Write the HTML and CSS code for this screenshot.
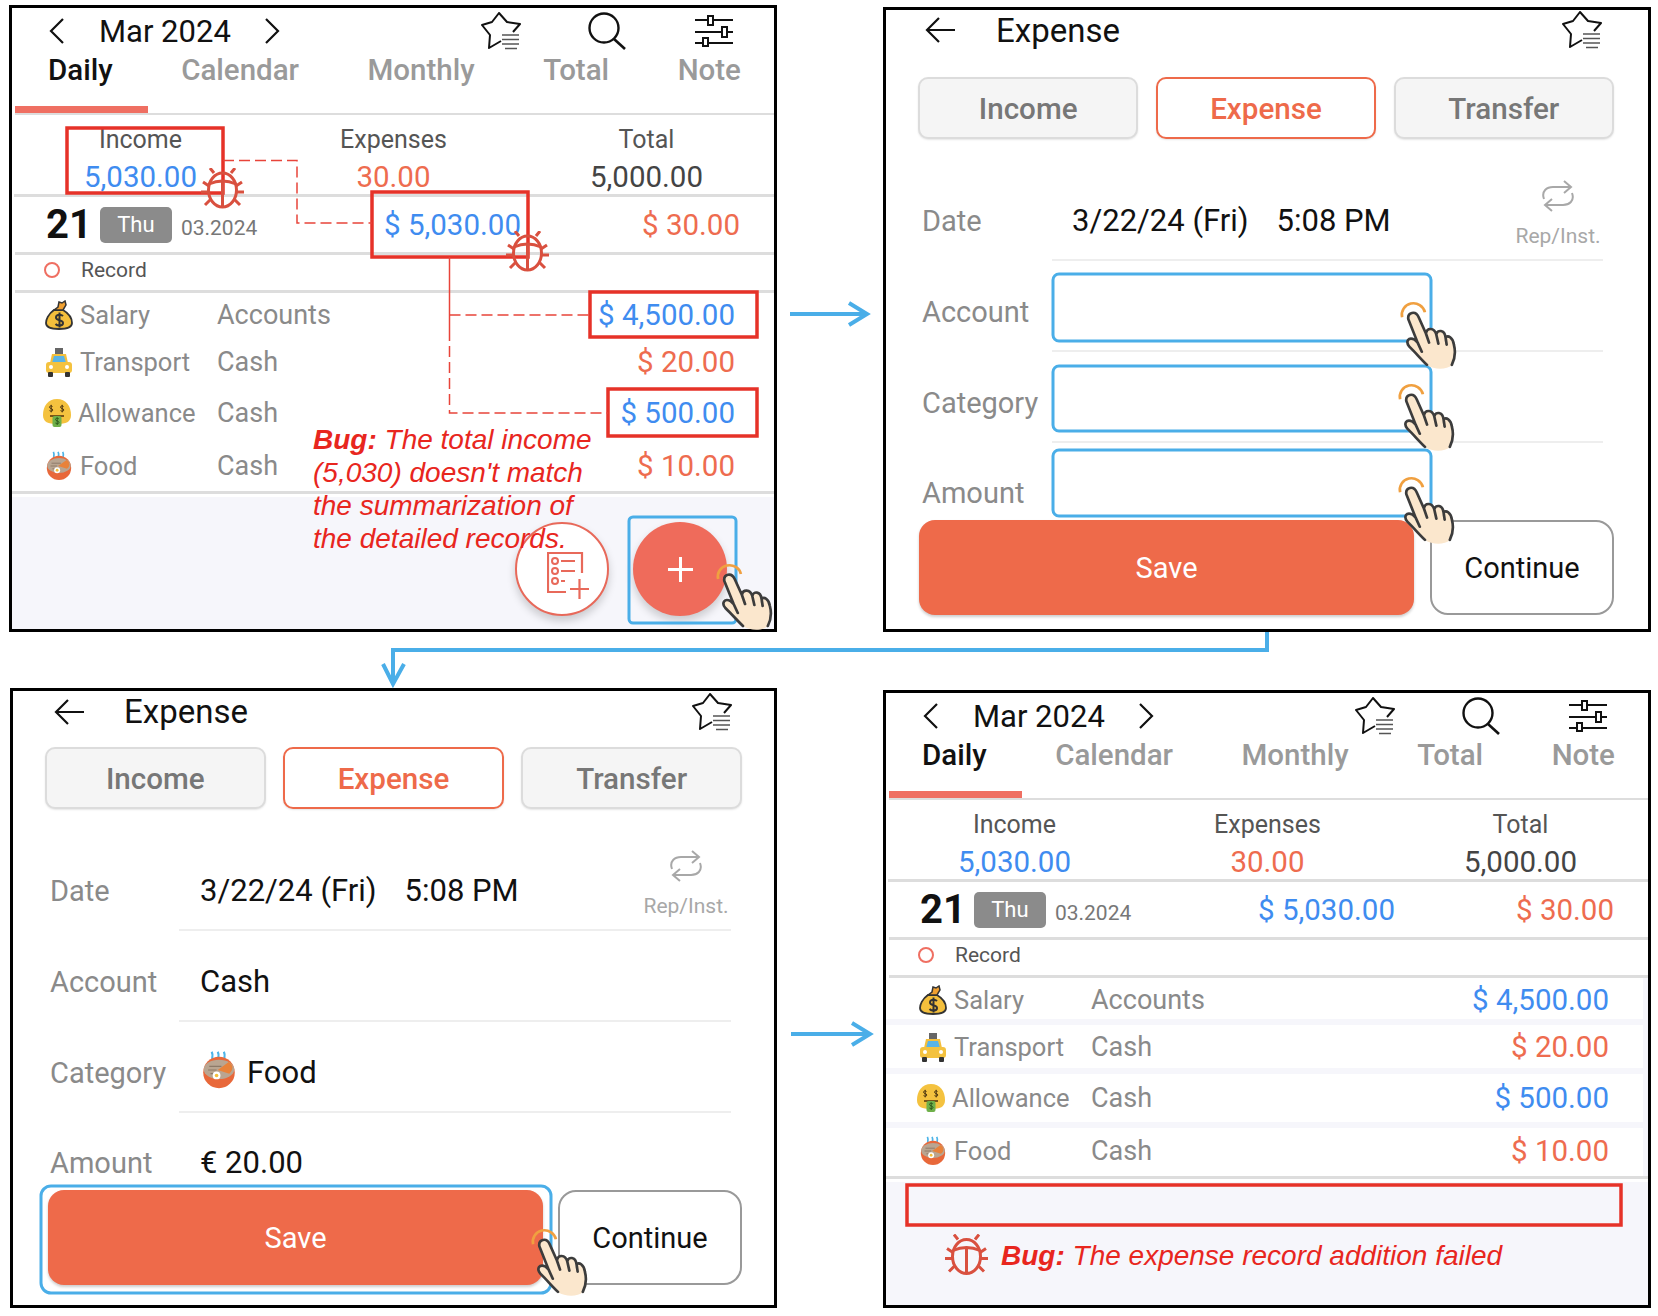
FILE: index.html
```html
<!DOCTYPE html>
<html lang="en">
<head>
    <meta charset="UTF-8">
    <title>Expense record bug walkthrough</title>
    <link rel="stylesheet" href="styles.css">
</head>
<body>
    <!-- shared icons -->
    <svg class="defs" width="0" height="0">
        <symbol id="i-chev-l" viewBox="0 0 16 28"><path d="M14 2 L2 14 L14 26" fill="none" stroke="#111" stroke-width="2.2"/></symbol>
        <symbol id="i-chev-r" viewBox="0 0 16 28"><path d="M2 2 L14 14 L2 26" fill="none" stroke="#111" stroke-width="2.2"/></symbol>
        <symbol id="i-back" viewBox="0 0 30 28"><path d="M30 14 H2 M14 2 L2 14 L14 26" fill="none" stroke="#111" stroke-width="2.2"/></symbol>
        <symbol id="i-star" viewBox="0 0 40 38">
            <path d="M20 29 L8 36 L9 23 L1 13 L11 10 L18 1 L26 10 L39 12 L32 20" fill="none" stroke="#111" stroke-width="2" stroke-linejoin="round"/>
            <path d="M21 23 H38 M21 27.500 H38 M21 32 H38 M24 36.500 H36" fill="none" stroke="#555" stroke-width="1.500"/>
        </symbol>
        <symbol id="i-search" viewBox="0 0 38 38">
            <circle cx="16" cy="16" r="14.500" fill="none" stroke="#111" stroke-width="2.400"/>
            <path d="M26 27 L37 37" stroke="#111" stroke-width="2.600"/>
        </symbol>
        <symbol id="i-sliders" viewBox="0 0 38 32">
            <path d="M0 5 H38 M0 17 H38 M0 28 H38" stroke="#111" stroke-width="2.200"/>
            <rect x="13" y="1" width="5" height="9" fill="#fff" stroke="#111" stroke-width="2"/>
            <rect x="27" y="12" width="5" height="10" fill="#fff" stroke="#111" stroke-width="2"/>
            <rect x="8" y="23" width="5" height="8" fill="#fff" stroke="#111" stroke-width="2"/>
        </symbol>
        <symbol id="i-repeat" viewBox="0 0 34 32">
            <path d="M3 19 C0 11 6 7 12 7 H30 M23 1 L30 7 L23 13 M31 13 C34 21 28 25 22 25 H4 M11 19 L4 25 L11 31" fill="none" stroke="#a8a8a8" stroke-width="2"/>
        </symbol>
        <symbol id="i-bug" viewBox="0 0 43 41">
            <g fill="none" stroke="#d9503f" stroke-width="3">
                <ellipse cx="21.500" cy="22" rx="14" ry="17"/>
                <path d="M8 16 Q21.500 10 35 16 M21.500 13 V39"/>
                <path d="M9 0 L13 5 M34 0 L30 5 M2 14 L8 18 M41 14 L35 18 M0 24 H7 M43 24 H36 M4 37 L10 31 M39 37 L33 31"/>
            </g>
        </symbol>
        <symbol id="i-hand" viewBox="0 0 56 68" preserveAspectRatio="none">
            <path d="M3 17 A11 11 0 0 1 25 12" fill="none" stroke="#f0a040" stroke-width="2.600"/>
            <path d="M9 19 C8 12 16 10 19 17 L26 33 C27 27 34 27 36 34 C37 29 44 29 45 37 C47 34 52 37 53 44 C55 52 54 58 51 64 C46 69 34 69 27 64 C21 58 16 52 10 46 C6 41 9 36 15 39 L18 42 Z" fill="#fbe7cd"/>
            <path d="M51 64 C54 58 55 52 53 44 C52 37 47 34 45 37 C44 29 37 29 36 34 C34 27 27 27 26 33 L19 17 C16 10 8 12 9 19 L18 42 L15 39 C9 36 6 41 10 46 C16 52 21 58 27 64 M26 33 L29 42 M36 34 L38 43 M45 37 L46 44 M18 42 L22 51" fill="none" stroke="#3c3c3c" stroke-width="2.600" stroke-linecap="round"/>
        </symbol>
        <symbol id="e-bag" viewBox="0 0 28 30">
            <path d="M9 10 C3 14 1 20 1 23 C1 28 7 29 14 29 C21 29 27 28 27 23 C27 17 23 13 18 10 Z" fill="#f4bf3c" stroke="#333" stroke-width="1.800"/>
            <path d="M9 10 L13 7 L14 2 L17 3 L20 1 L21 5 L18 10 Z" fill="#f0a030" stroke="#333" stroke-width="1.500"/>
            <path d="M18 16 C16 14 11 14 11 17.500 C11 21 18 19.500 18 23 C18 26 13 26.500 10.500 24 M14.500 12.500 V27.500" fill="none" stroke="#333" stroke-width="2"/>
        </symbol>
        <symbol id="e-taxi" viewBox="0 0 28 30">
            <rect x="10" y="1" width="8" height="6" fill="#666"/>
            <path d="M5 16 L7 7 H21 L23 16 Z" fill="#f4bf3c"/>
            <path d="M7 16 L9 9 H19 L21 16 Z" fill="#5ab4e6"/>
            <rect x="1" y="15" width="26" height="11" rx="3" fill="#f4c23f"/>
            <rect x="3" y="25" width="5" height="5" rx="1" fill="#333"/>
            <rect x="20" y="25" width="5" height="5" rx="1" fill="#333"/>
            <circle cx="6" cy="20" r="2" fill="#fff"/>
            <circle cx="22" cy="20" r="2" fill="#fff"/>
        </symbol>
        <symbol id="e-money" viewBox="0 0 30 30">
            <path d="M15 1 C24 1 29 8 29 17 C29 24 24 26 15 26 C6 26 1 24 1 17 C1 8 6 1 15 1 Z" fill="#f4c23f"/>
            <path d="M10.500 8.500 C9.500 7.500 7.500 7.800 7.500 9.200 C7.500 10.800 10.800 10.300 10.800 12 C10.800 13.400 8.700 13.600 7.500 12.600 M9.200 6.800 V14.400" fill="none" stroke="#4a3410" stroke-width="1"/>
            <path d="M21.500 8.500 C20.500 7.500 18.500 7.800 18.500 9.200 C18.500 10.800 21.800 10.300 21.800 12 C21.800 13.400 19.700 13.600 18.500 12.600 M20.200 6.800 V14.400" fill="none" stroke="#4a3410" stroke-width="1"/>
            <path d="M8 18 H22" stroke="#5a3a10" stroke-width="1.600"/>
            <rect x="10.500" y="18" width="9" height="11" rx="2" fill="#6fb04a"/>
            <path d="M16.800 20.800 C15.800 19.800 13.500 20 13.500 21.500 C13.500 23.200 17 22.700 17 24.400 C17 25.800 14.800 26 13.400 25 M15.200 19.400 V27" fill="none" stroke="#2e5a1c" stroke-width="1"/>
        </symbol>
        <symbol id="e-bowl" viewBox="0 0 28 32">
            <path d="M9 9 C7 7 10 5 8 1 M14 9 C12 7 15 5 13 1 M19 9 C17 7 20 5 18 1" fill="none" stroke="#4db4e8" stroke-width="1.800"/>
            <circle cx="14" cy="18" r="13" fill="#e8683a"/>
            <ellipse cx="14" cy="15.500" rx="12.500" ry="8" fill="#b9a591"/>
            <path d="M6 13 H16 M5 16 H12 M7 19 H14" stroke="#8d7a68" stroke-width="1"/>
            <path d="M13 16 L22 9.500 C26 12 26 16 22.500 19 Z" fill="#e8823a"/>
            <circle cx="12" cy="20.500" r="3.200" fill="#fff"/>
            <circle cx="12" cy="20.500" r="1.500" fill="#f4bf3c"/>
        </symbol>
    </svg>

    <main class="board">
        <section class="panel panel-top ledger">
            <header class="top-bar">
                <svg class="chev"><use href="#i-chev-l"/></svg>
                <h1 class="month">Mar 2024</h1>
                <svg class="chev"><use href="#i-chev-r"/></svg>
                <div class="top-icons">
                    <svg class="ico-star"><use href="#i-star"/></svg>
                    <svg class="ico-search"><use href="#i-search"/></svg>
                    <svg class="ico-sliders"><use href="#i-sliders"/></svg>
                </div>
            </header>
            <nav class="tabs">
                <span class="tab active">Daily</span>
                <span class="tab">Calendar</span>
                <span class="tab">Monthly</span>
                <span class="tab">Total</span>
                <span class="tab">Note</span>
            </nav>
            <div class="summary">
                <div class="sum-col"><span class="sum-label">Income</span><span class="sum-value blue">5,030.00</span></div>
                <div class="sum-col"><span class="sum-label">Expenses</span><span class="sum-value orange">30.00</span></div>
                <div class="sum-col"><span class="sum-label">Total</span><span class="sum-value dark">5,000.00</span></div>
            </div>
            <div class="day-row">
                <div class="day-left">
                    <span class="day-num">21</span>
                    <span class="day-badge">Thu</span>
                    <span class="day-month">03.2024</span>
                </div>
                <span class="money blue">$ 5,030.00</span>
                <span class="money orange day-exp">$ 30.00</span>
            </div>
            <div class="record-row"><span class="record-dot"></span><span>Record</span></div>
            <div class="rows">
                <div class="row">
                    <svg class="emoji"><use href="#e-bag"/></svg>
                    <span class="row-cat">Salary</span>
                    <span class="row-acc">Accounts</span>
                    <span class="money blue">$ 4,500.00</span>
                </div>
                <div class="row">
                    <svg class="emoji"><use href="#e-taxi"/></svg>
                    <span class="row-cat">Transport</span>
                    <span class="row-acc">Cash</span>
                    <span class="money orange">$ 20.00</span>
                </div>
                <div class="row">
                    <svg class="emoji emoji-wide"><use href="#e-money"/></svg>
                    <span class="row-cat row-cat-wide">Allowance</span>
                    <span class="row-acc">Cash</span>
                    <span class="money blue">$ 500.00</span>
                </div>
                <div class="row">
                    <svg class="emoji"><use href="#e-bowl"/></svg>
                    <span class="row-cat">Food</span>
                    <span class="row-acc">Cash</span>
                    <span class="money orange">$ 10.00</span>
                </div>
            </div>
            <div class="ledger-foot">
                <div class="fab fab-outline">
                    <svg class="fab-list" viewBox="0 0 42 47">
                        <path d="M35 21 V1 H1 V40 H19" fill="none" stroke="#e8695a" stroke-width="2.200"/>
                        <g fill="none" stroke="#e8695a" stroke-width="2">
                            <circle cx="8" cy="9" r="3"/><circle cx="8" cy="19" r="3"/><circle cx="8" cy="29" r="3"/>
                        </g>
                        <path d="M14 9 H28 M14 19 H28 M14 29 H18 M23 37 H42 M32.500 27 V47" stroke="#e8695a" stroke-width="2.200"/>
                    </svg>
                </div>
                <div class="fab fab-add"><span class="plus"></span></div>
            </div>
        </section>

        <section class="panel panel-top form">
            <header class="form-head">
                <svg class="back"><use href="#i-back"/></svg>
                <h2 class="form-title">Expense</h2>
                <svg class="ico-star"><use href="#i-star"/></svg>
            </header>
            <div class="seg">
                <span class="seg-btn">Income</span>
                <span class="seg-btn seg-on">Expense</span>
                <span class="seg-btn">Transfer</span>
            </div>
            <div class="field">
                <span class="field-label">Date</span>
                <div class="field-value">3/22/24 (Fri)<span class="field-time">5:08 PM</span>
                    <div class="rep"><svg class="rep-ico"><use href="#i-repeat"/></svg><span>Rep/Inst.</span></div>
                </div>
            </div>
            <div class="field"><span class="field-label">Account</span><div class="field-value"></div></div>
            <div class="field"><span class="field-label">Category</span><div class="field-value"></div></div>
            <div class="field field-last"><span class="field-label">Amount</span><div class="field-value"></div></div>
            <div class="form-foot">
                <span class="btn-save">Save</span>
                <span class="btn-continue">Continue</span>
            </div>
        </section>

        <section class="panel panel-bottom panel-shift form form-tight">
            <header class="form-head">
                <svg class="back"><use href="#i-back"/></svg>
                <h2 class="form-title">Expense</h2>
                <svg class="ico-star"><use href="#i-star"/></svg>
            </header>
            <div class="seg">
                <span class="seg-btn">Income</span>
                <span class="seg-btn seg-on">Expense</span>
                <span class="seg-btn">Transfer</span>
            </div>
            <div class="field">
                <span class="field-label">Date</span>
                <div class="field-value">3/22/24 (Fri)<span class="field-time">5:08 PM</span>
                    <div class="rep"><svg class="rep-ico"><use href="#i-repeat"/></svg><span>Rep/Inst.</span></div>
                </div>
            </div>
            <div class="field"><span class="field-label">Account</span><div class="field-value">Cash</div></div>
            <div class="field"><span class="field-label">Category</span><div class="field-value"><svg class="emoji-big"><use href="#e-bowl"/></svg>Food</div></div>
            <div class="field field-last"><span class="field-label">Amount</span><div class="field-value">€ 20.00</div></div>
            <div class="form-foot">
                <span class="btn-save">Save</span>
                <span class="btn-continue">Continue</span>
            </div>
        </section>

        <section class="panel panel-bottom ledger">
            <header class="top-bar">
                <svg class="chev"><use href="#i-chev-l"/></svg>
                <h1 class="month">Mar 2024</h1>
                <svg class="chev"><use href="#i-chev-r"/></svg>
                <div class="top-icons">
                    <svg class="ico-star"><use href="#i-star"/></svg>
                    <svg class="ico-search"><use href="#i-search"/></svg>
                    <svg class="ico-sliders"><use href="#i-sliders"/></svg>
                </div>
            </header>
            <nav class="tabs">
                <span class="tab active">Daily</span>
                <span class="tab">Calendar</span>
                <span class="tab">Monthly</span>
                <span class="tab">Total</span>
                <span class="tab">Note</span>
            </nav>
            <div class="summary">
                <div class="sum-col"><span class="sum-label">Income</span><span class="sum-value blue">5,030.00</span></div>
                <div class="sum-col"><span class="sum-label">Expenses</span><span class="sum-value orange">30.00</span></div>
                <div class="sum-col"><span class="sum-label">Total</span><span class="sum-value dark">5,000.00</span></div>
            </div>
            <div class="day-row">
                <div class="day-left">
                    <span class="day-num">21</span>
                    <span class="day-badge">Thu</span>
                    <span class="day-month">03.2024</span>
                </div>
                <span class="money blue">$ 5,030.00</span>
                <span class="money orange day-exp">$ 30.00</span>
            </div>
            <div class="record-row"><span class="record-dot"></span><span>Record</span></div>
            <div class="rows rows-striped">
                <div class="row">
                    <svg class="emoji"><use href="#e-bag"/></svg>
                    <span class="row-cat">Salary</span>
                    <span class="row-acc">Accounts</span>
                    <span class="money blue">$ 4,500.00</span>
                </div>
                <div class="row">
                    <svg class="emoji"><use href="#e-taxi"/></svg>
                    <span class="row-cat">Transport</span>
                    <span class="row-acc">Cash</span>
                    <span class="money orange">$ 20.00</span>
                </div>
                <div class="row">
                    <svg class="emoji emoji-wide"><use href="#e-money"/></svg>
                    <span class="row-cat row-cat-wide">Allowance</span>
                    <span class="row-acc">Cash</span>
                    <span class="money blue">$ 500.00</span>
                </div>
                <div class="row">
                    <svg class="emoji"><use href="#e-bowl"/></svg>
                    <span class="row-cat">Food</span>
                    <span class="row-acc">Cash</span>
                    <span class="money orange">$ 10.00</span>
                </div>
            </div>
            <div class="ledger-foot"></div>
        </section>

        <!-- annotations drawn over the screens, in page coordinates -->
        <svg class="marks" width="1658" height="1316" viewBox="0 0 1658 1316">
            <g class="mark-red">
                <rect x="67" y="128" width="156" height="65"/>
                <rect x="372" y="192" width="156" height="65"/>
                <rect x="590" y="292" width="167" height="45"/>
                <rect x="608" y="389" width="149" height="47"/>
                <rect x="907" y="1185" width="714" height="40"/>
            </g>
            <g class="mark-dash">
                <path d="M223 160.500 H297 V223 H372"/>
                <path d="M449.500 330 V413 H608 M449.500 315 H590"/>
            </g>
            <path class="mark-solid" d="M449.500 257 V330"/>

            <use href="#i-bug" x="201" y="168" width="43" height="41"/>
            <use href="#i-bug" x="506" y="231" width="43" height="41"/>
            <use href="#i-bug" x="945" y="1234" width="43" height="42"/>

            <g class="mark-blue">
                <rect x="629" y="517" width="107" height="106" rx="4"/>
                <rect x="1053" y="274" width="378" height="67" rx="6"/>
                <rect x="1053" y="366" width="378" height="65" rx="6"/>
                <rect x="1053" y="450" width="378" height="66" rx="6"/>
                <rect x="41" y="1186" width="510" height="107" rx="10"/>
            </g>
            <g class="mark-arrow">
                <path d="M790 314 H866 M849 303 L867 314 L849 325"/>
                <path d="M791 1034 H869 M852 1023 L870 1034 L852 1045"/>
                <path d="M1267 632 V650 H393 V682 M383 664 L393 684 L404 664"/>
            </g>

            <use href="#i-hand" x="715" y="562" width="58" height="68"/>
            <use href="#i-hand" x="1399" y="300" width="58" height="69"/>
            <use href="#i-hand" x="1397" y="382" width="58" height="69"/>
            <use href="#i-hand" x="1397" y="475" width="58" height="69"/>
            <use href="#i-hand" x="530" y="1227" width="58" height="69"/>
        </svg>

        <p class="note note-income"><b>Bug:</b> The total income<br>(5,030) doesn't match<br>the summarization of<br>the detailed records.</p>
        <p class="note note-failed"><b>Bug:</b> The expense record addition failed</p>
    </main>
</body>
</html>
```

FILE: styles.css
```css
* {
    box-sizing: border-box;
}

body {
    margin: 0;
    background-color: #fff;
    font-family: Roboto, "Liberation Sans", sans-serif;
    color: #111;
}

.defs {
    position: absolute;
}

.board {
    position: relative;
    display: grid;
    grid-template-columns: 768px 768px;
    grid-template-rows: 627px 620px;
    column-gap: 106px;
    row-gap: 56px;
    padding: 5px 0 0 9px;
    width: 1658px;
    height: 1316px;
    overflow: hidden;
}

.panel {
    align-self: end;
    display: flex;
    flex-direction: column;
    border: 3px solid #000;
    background-color: #fff;
    overflow: hidden;
}

.panel-shift {
    margin-left: 1px;
}

.panel:nth-child(1) { height: 627px; }
.panel:nth-child(2) { height: 625px; }
.panel:nth-child(3) { height: 620px; }
.panel:nth-child(4) { height: 618px; }

.blue { color: #3f8cf0; }
.orange { color: #ee6c4f; }
.dark { color: #444; }

/* ledger screen */
.top-bar {
    display: flex;
    align-items: center;
    height: 46px;
    padding: 0 41px 0 37px;
}

.chev {
    width: 16px;
    height: 28px;
}

.month {
    margin: 0 33px 0 34px;
    font-size: 31px;
    font-weight: 400;
}

.top-icons {
    display: flex;
    align-items: center;
    gap: 67px;
    margin-left: auto;
}

.ico-star {
    width: 40px;
    height: 38px;
}

.ico-search {
    width: 38px;
    height: 38px;
}

.ico-sliders {
    width: 38px;
    height: 32px;
    margin-left: 2px;
}

.tabs {
    display: flex;
    gap: 68.500px;
    height: 61px;
    margin-left: 3px;
    padding-left: 33px;
    border-bottom: 2px solid #ddd;
    font-size: 29.500px;
    font-weight: 500;
    line-height: 32px;
    color: #9a9a9a;
}

.tab {
    position: relative;
    height: 59px;
    white-space: nowrap;
}

.tab.active {
    color: #111;
}

.tab.active::after {
    content: "";
    position: absolute;
    left: -33px;
    bottom: 0;
    width: 133px;
    height: 7px;
    background-color: #ef6f62;
}

.summary {
    display: grid;
    grid-template-columns: repeat(3, 253px);
    height: 82px;
    margin-left: 2px;
    padding-top: 10px;
    border-bottom: 3px solid #ddd;
}

.sum-col {
    display: flex;
    flex-direction: column;
    align-items: center;
}

.sum-label {
    font-size: 25px;
    line-height: 30px;
    color: #555;
}

.sum-value {
    margin-top: 4px;
    font-size: 29.500px;
    line-height: 36px;
}

.day-row {
    display: flex;
    align-items: center;
    height: 58px;
    margin-left: 3px;
    padding-right: 34px;
    border-bottom: 3px solid #ddd;
}

.day-left {
    display: flex;
    align-items: center;
    width: 369px;
    padding-left: 31px;
}

.day-num {
    font-size: 40px;
    font-weight: 700;
}

.day-badge {
    margin-left: 8px;
    width: 72px;
    height: 36px;
    border-radius: 5px;
    background-color: #8b8b8b;
    color: #fff;
    font-size: 22px;
    line-height: 35px;
    text-align: center;
}

.day-month {
    margin: 6px 0 0 9px;
    font-size: 21px;
    color: #777;
}

.money {
    font-size: 29.500px;
    line-height: 36px;
    white-space: nowrap;
}

.day-exp {
    margin-left: auto;
}

.record-row {
    display: flex;
    align-items: center;
    gap: 21px;
    height: 38px;
    margin-left: 3px;
    padding: 0 0 5px 29px;
    border-bottom: 3px solid #ddd;
    font-size: 21px;
    color: #555;
}

.record-dot {
    width: 16px;
    height: 16px;
    border: 2.500px solid #ef6f62;
    border-radius: 50%;
}

.rows {
    display: flex;
    flex-direction: column;
    border-bottom: 3px solid #ddd;
}

.row {
    position: relative;
    display: flex;
    align-items: center;
    padding: 0 39px 0 33px;
    font-size: 25.500px;
    color: #8a8a8a;
}

.row:nth-child(1) { height: 44px; }
.row:nth-child(2) { height: 49px; }
.row:nth-child(3) { height: 54px; }
.row:nth-child(4) { height: 51px; }

.rows-striped .row {
    box-shadow: inset -5px 0 0 #f6f6fb;
}

.rows-striped .row:not(:last-child)::after {
    content: "";
    position: absolute;
    left: 0;
    right: 0;
    bottom: -3px;
    height: 6px;
    background-color: #f6f6fb;
}

.emoji {
    flex: none;
    width: 28px;
    height: 30px;
    margin-right: 7px;
}

.emoji-wide {
    width: 30px;
    margin: 0 6px 0 -3px;
}

.row-cat {
    width: 137px;
}

.row-cat-wide {
    width: 139px;
}

.row-acc {
    flex: 1;
    font-size: 27px;
}

.ledger-foot {
    flex: 1;
    display: flex;
    justify-content: flex-end;
    gap: 24px;
    margin-top: 3px;
    padding: 25px 47px 0 0;
    background-color: #f6f6fb;
}

.fab {
    display: flex;
    align-items: center;
    justify-content: center;
    width: 94px;
    height: 94px;
    border-radius: 50%;
    box-shadow: 0 5px 8px rgba(0, 0, 0, 0.18);
}

.fab-outline {
    border: 2px solid #e8695a;
    background-color: #fff;
}

.fab-list {
    width: 42px;
    height: 47px;
    margin: 12px 0 0 11px;
}

.fab-add {
    background-color: #ef6b5b;
}

.plus {
    position: relative;
    width: 25px;
    height: 3px;
    background-color: #fff;
}

.plus::after {
    content: "";
    position: absolute;
    left: 11px;
    top: -11px;
    width: 3px;
    height: 25px;
    background-color: #fff;
}

/* expense form screen */
.form-head {
    display: flex;
    align-items: center;
    height: 40px;
    margin-bottom: 27px;
    padding: 0 46px 0 39px;
}

.form-tight .form-head {
    height: 41px;
    margin-bottom: 15px;
    padding: 0 42px 0 41px;
}

.back {
    width: 30px;
    height: 28px;
}

.form-title {
    flex: 1;
    margin: 0 0 0 41px;
    font-size: 33px;
    font-weight: 400;
}

.form-tight .form-title {
    margin-left: 40px;
}

.seg {
    display: grid;
    grid-template-columns: repeat(3, 1fr);
    grid-template-rows: 62px;
    gap: 17.500px;
    height: 62px;
    padding: 0 34px 0 32px;
}

.form-tight .seg {
    padding-right: 32px;
}

.seg-btn {
    padding-top: 1px;
    border: 2px solid #dcdcdc;
    border-radius: 10px;
    background-color: #f5f5f5;
    box-shadow: 0 1px 2px rgba(0, 0, 0, 0.1);
    color: #777;
    font-size: 29.600px;
    font-weight: 500;
    line-height: 58px;
    text-align: center;
}

.seg-on {
    border-color: #ee6a4a;
    background-color: #fff;
    color: #ee6a4a;
}

.field {
    display: grid;
    grid-template-columns: 130px 1fr;
    height: 91px;
    margin-right: 45px;
    padding-left: 36px;
}

.form-tight .field {
    grid-template-columns: 129px 1fr;
    margin-right: 43px;
    padding-left: 37px;
}

.seg + .field {
    margin-top: 31px;
}

.field-last {
    height: 77px;
}

.field-label {
    align-self: center;
    padding-top: 10px;
    font-size: 29px;
    color: #8a8a8a;
    white-space: nowrap;
}

.field-value {
    display: flex;
    align-items: center;
    padding: 11px 0 0 20px;
    border-bottom: 2px solid #eee;
    font-size: 31px;
}

.form-tight .field-value {
    padding-left: 21px;
}

.field-last .field-value {
    padding-top: 22px;
    border-bottom: 0;
}

.field-last .field-label {
    padding-top: 22px;
}

.field-time {
    margin-left: 28px;
}

.rep {
    display: flex;
    flex-direction: column;
    align-items: center;
    gap: 12px;
    width: 90px;
    margin: -12px 0 0 auto;
    font-size: 21px;
    color: #a8a8a8;
}

.rep-ico {
    width: 34px;
    height: 32px;
}

.emoji-big {
    width: 34px;
    height: 40px;
    margin: -4px 11px 0 2px;
}

.form-foot {
    display: flex;
    gap: 16px;
    height: 95px;
    padding-left: 33px;
}

.form-tight .form-foot {
    gap: 15px;
    padding-left: 35px;
}

.btn-save {
    flex: none;
    width: 495px;
    border-radius: 16px;
    background-color: #ee6a4a;
    box-shadow: 0 2px 3px rgba(0, 0, 0, 0.2);
    color: #fff;
    font-size: 29px;
    line-height: 96px;
    text-align: center;
}

.btn-continue {
    flex: none;
    width: 184px;
    border: 2px solid #999;
    border-radius: 18px;
    background-color: #fff;
    font-size: 29px;
    line-height: 92px;
    text-align: center;
}

/* annotations */
.marks {
    position: absolute;
    left: 0;
    top: 0;
    pointer-events: none;
}

.mark-red rect {
    fill: none;
    stroke: #e63228;
    stroke-width: 3.500;
}

.mark-dash path {
    fill: none;
    stroke: #e8443a;
    stroke-width: 1.500;
    stroke-dasharray: 11 5;
}

.mark-solid {
    stroke: #e8443a;
    stroke-width: 1.500;
}

.mark-blue rect {
    fill: none;
    stroke: #4aaee8;
    stroke-width: 3;
}

.mark-arrow path {
    fill: none;
    stroke: #4aaee8;
    stroke-width: 4;
}

.note {
    position: absolute;
    margin: 0;
    font-family: "Liberation Sans", Arial, sans-serif;
    font-style: italic;
    font-size: 28px;
    line-height: 33px;
    color: #e8261e;
    white-space: nowrap;
}

.note-income {
    left: 313px;
    top: 423px;
}

.note-failed {
    left: 1001px;
    top: 1239px;
}
```
